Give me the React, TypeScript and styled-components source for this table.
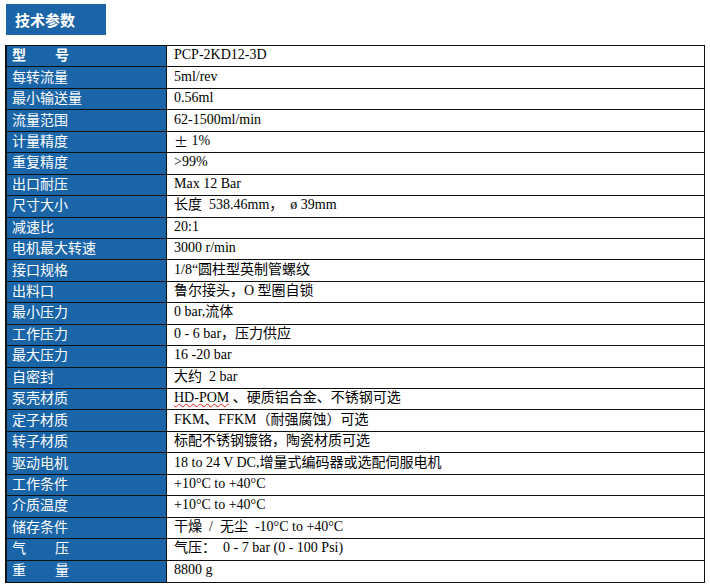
import React from "react";
import styled, { createGlobalStyle } from "styled-components";

const Global = createGlobalStyle`
  html, body { margin: 0; padding: 0; background: #ffffff; }
  body { font-family: "Liberation Serif", "Noto Sans CJK SC", serif; }
`;

const Page = styled.div`
  padding: 4px 0 0 5px;
  width: 710px;
  box-sizing: border-box;
`;

const Heading = styled.div`
  margin-left: 1px;
  width: 100px;
  height: 31px;
  background: #1b64a8;
  color: #ffffff;
  font-family: "Noto Sans CJK SC", sans-serif;
  font-weight: 700;
  font-size: 15px;
  display: flex;
  align-items: center;
  padding-left: 9px;
  padding-bottom: 1px;
  box-sizing: border-box;
  line-height: 1;
`;

const Table = styled.div`
  margin-top: 10px;
  width: 700px;
  height: 538px;
  box-sizing: border-box;
  border: 1px solid #111;
  border-left-width: 2px;
  display: grid;
  grid-template-columns: 160px 1fr;
  grid-template-rows: repeat(25, 1fr);
`;

const LabelCell = styled.div<{ $last?: boolean; $bold?: boolean }>`
  background: #1a64a8;
  color: #ffffff;
  font-family: "Noto Sans CJK SC", sans-serif;
  font-size: 14px;
  font-weight: ${(p) => (p.$bold ? 700 : 400)};
  display: flex;
  align-items: center;
  padding-left: 5px;
  padding-bottom: 4px;
  border-right: 1px solid #111;
  border-bottom: ${(p) => (p.$last ? "none" : "1px solid #111")};
  line-height: 1;
`;

const Char = styled.span<{ $gap: number }>`
  & + & { margin-left: ${(p) => p.$gap}px; }
`;

const ValueCell = styled.div<{ $last?: boolean }>`
  color: #000;
  font-family: "Liberation Serif", "Noto Sans CJK SC", serif;
  font-size: 14px;
  display: flex;
  align-items: center;
  padding-left: 7px;
  padding-bottom: 2px;
  white-space: pre;
  border-bottom: ${(p) => (p.$last ? "none" : "1px solid #111")};
  line-height: 1;
`;

const Wavy = styled.span`
  text-decoration: underline wavy #e81c1c;
  text-decoration-thickness: 1px;
  text-underline-offset: 1px;
`;

const Cjk = styled.span`
  font-family: "Noto Sans CJK SC", sans-serif;
`;

type Row = { label: string; gap?: number; bold?: boolean; value: React.ReactNode };

const rows: Row[] = [
  { label: "型号", gap: 22, bold: true, value: "PCP-2KD12-3D" },
  { label: "每转流量", value: "5ml/rev" },
  { label: "最小输送量", value: "0.56ml" },
  { label: "流量范围", value: "62-1500ml/min" },
  {
    label: "计量精度",
    value: (
      <>
        <Cjk>±</Cjk> 1%
      </>
    ),
  },
  { label: "重复精度", value: ">99%" },
  { label: "出口耐压", value: "Max 12 Bar" },
  { label: "尺寸大小", value: "长度  538.46mm，  ø 39mm" },
  { label: "减速比", value: "20:1" },
  { label: "电机最大转速", value: "3000 r/min" },
  { label: "接口规格", value: "1/8“圆柱型英制管螺纹" },
  { label: "出料口", value: "鲁尔接头，O 型圈自锁" },
  { label: "最小压力", value: "0 bar,流体" },
  { label: "工作压力", value: "0 - 6 bar，压力供应" },
  { label: "最大压力", value: "16 -20 bar" },
  { label: "自密封", value: "大约  2 bar" },
  {
    label: "泵壳材质",
    value: (
      <>
        <Wavy>HD-POM</Wavy> 、硬质铝合金、不锈钢可选
      </>
    ),
  },
  { label: "定子材质", value: "FKM、FFKM（耐强腐蚀）可选" },
  { label: "转子材质", value: "标配不锈钢镀铬，陶瓷材质可选" },
  { label: "驱动电机", value: "18 to 24 V DC,增量式编码器或选配伺服电机" },
  { label: "工作条件", value: "+10°C to +40°C" },
  { label: "介质温度", value: "+10°C to +40°C" },
  { label: "储存条件", value: "干燥  /  无尘  -10°C to +40°C" },
  { label: "气压", gap: 29, value: "气压：  0 - 7 bar (0 - 100 Psi)" },
  { label: "重量", gap: 29, value: "8800 g" },
];

export default function App() {
  return (
    <>
      <Global />
      <Page>
        <Heading>技术参数</Heading>
        <Table>
          {rows.map((r, i) => {
            const last = i === rows.length - 1;
            return (
              <React.Fragment key={i}>
                <LabelCell $last={last} $bold={r.bold}>
                  {r.gap
                    ? r.label.split("").map((c, j) => (
                        <Char key={j} $gap={r.gap as number}>
                          {c}
                        </Char>
                      ))
                    : r.label}
                </LabelCell>
                <ValueCell $last={last}>{r.value}</ValueCell>
              </React.Fragment>
            );
          })}
        </Table>
      </Page>
    </>
  );
}
